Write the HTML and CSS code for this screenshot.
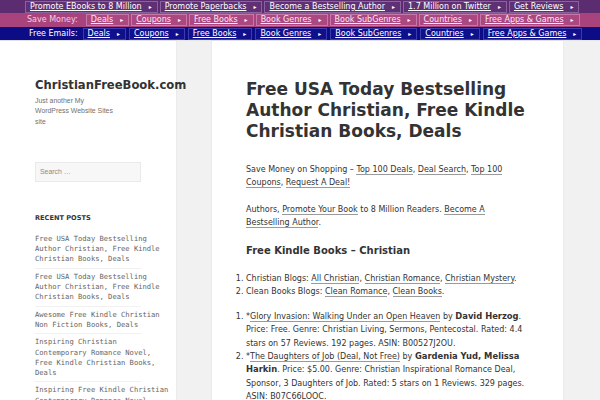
FILE: index.html
```html
<!DOCTYPE html>
<html>
<head>
<meta charset="utf-8">
<link rel="stylesheet" href="styles.css">
</head>
<body>
<div class="topnav">
  <div class="navrow row1">
    <span class="box"><a href="#">Promote EBooks to 8 Million</a><span class="arr">▸</span></span>
    <span class="box"><a href="#">Promote Paperbacks</a><span class="arr">▸</span></span>
    <span class="box"><a href="#">Become a Bestselling Author</a><span class="arr">▸</span></span>
    <span class="box"><a href="#">1.7 Million on Twitter</a><span class="arr">▸</span></span>
    <span class="box"><a href="#">Get Reviews</a><span class="arr">▸</span></span>
  </div>
  <div class="navrow row2">
    <span class="label">Save Money:</span>
    <span class="box"><a href="#">Deals</a><span class="arr">▸</span></span>
    <span class="box"><a href="#">Coupons</a><span class="arr">▸</span></span>
    <span class="box"><a href="#">Free Books</a><span class="arr">▸</span></span>
    <span class="box"><a href="#">Book Genres</a><span class="arr">▸</span></span>
    <span class="box"><a href="#">Book SubGenres</a><span class="arr">▸</span></span>
    <span class="box"><a href="#">Countries</a><span class="arr">▸</span></span>
    <span class="box"><a href="#">Free Apps &amp; Games</a><span class="arr">▸</span></span>
  </div>
  <div class="navrow row3">
    <span class="label">Free Emails:</span>
    <span class="box"><a href="#">Deals</a><span class="arr">▸</span></span>
    <span class="box"><a href="#">Coupons</a><span class="arr">▸</span></span>
    <span class="box"><a href="#">Free Books</a><span class="arr">▸</span></span>
    <span class="box"><a href="#">Book Genres</a><span class="arr">▸</span></span>
    <span class="box"><a href="#">Book SubGenres</a><span class="arr">▸</span></span>
    <span class="box"><a href="#">Countries</a><span class="arr">▸</span></span>
    <span class="box"><a href="#">Free Apps &amp; Games</a><span class="arr">▸</span></span>
  </div>
</div>

<div class="page">
  <aside class="sidebar">
    <div class="site-title">ChristianFreeBook.com</div>
    <div class="tagline">Just another My WordPress Website Sites site</div>
    <div class="search">Search …</div>
    <h2 class="widget-title">RECENT POSTS</h2>
    <ul class="recent">
      <li>Free USA Today Bestselling Author Christian, Free Kindle Christian Books, Deals</li>
      <li>Free USA Today Bestselling Author Christian, Free Kindle Christian Books, Deals</li>
      <li>Awesome Free Kindle Christian Non Fiction Books, Deals</li>
      <li>Inspiring Christian Contemporary Romance Novel, Free Kindle Christian Books, Deals</li>
      <li>Inspiring Free Kindle Christian Contemporary Romance Novel, Deals</li>
    </ul>
  </aside>
  <div class="gutter"></div>
  <main class="content">
    <h1 class="entry-title">Free USA Today Bestselling Author Christian, Free Kindle Christian Books, Deals</h1>
    <p>Save Money on Shopping – <a href="#">Top 100 Deals</a>, <a href="#">Deal Search</a>, <a href="#">Top 100 Coupons</a>, <a href="#">Request A Deal!</a></p>
    <p>Authors, <a href="#">Promote Your Book</a> to 8 Million Readers. <a href="#">Become A Bestselling Author</a>.</p>
    <p class="sub"><strong>Free Kindle Books – Christian</strong></p>
    <ol>
      <li>Christian Blogs: <a href="#">All Christian</a>, <a href="#">Christian Romance</a>, <a href="#">Christian Mystery</a>.</li>
      <li>Clean Books Blogs: <a href="#">Clean Romance</a>, <a href="#">Clean Books</a>.</li>
    </ol>
    <ol>
      <li>*<a href="#">Glory Invasion: Walking Under an Open Heaven</a> by <strong>David Herzog</strong>. Price: Free. Genre: Christian Living, Sermons, Pentecostal. Rated: 4.4 stars on 57 Reviews. 192 pages. ASIN: B00527J2OU.</li>
      <li>*<a href="#">The Daughters of Job (Deal, Not Free)</a> by <strong>Gardenia Yud, Melissa Harkin</strong>. Price: $5.00. Genre: Christian Inspirational Romance Deal, Sponsor, 3 Daughters of Job. Rated: 5 stars on 1 Reviews. 329 pages. ASIN: B07C66LOOC.</li>
    </ol>
  </main>
</div>
</body>
</html>
```

FILE: styles.css
```css
html, body {
  margin: 0;
  padding: 0;
}
body {
  background: #f1f1f1;
  font-family: "DejaVu Sans", Verdana, sans-serif;
  color: #333;
  overflow: hidden;
}

/* Top navigation bars */
.topnav {
  display: flex;
  flex-direction: column;
}
.navrow {
  display: flex;
  align-items: center;
  padding-left: 25px;
  font-size: 8px;
  white-space: nowrap;
}
.row1 { height: 13px; background: #5b2c6f; }
.row2 { height: 14px; background: #a8437e; }
.row3 { height: 13px; background: #0c0c86; border-bottom: 1px solid #e6e6e6; }

.label {
  margin: 0 8px 0 2px;
  line-height: 10px;
}
.row2 .label { color: #f3cde2; }
.row3 .label { color: #ffffff; margin-left: 4px; margin-right: 5px; }

.box {
  display: flex;
  align-items: center;
  height: 10px;
  padding: 0 5px 0 4px;
  margin-right: 2px;
  border: 1px solid;
  line-height: 10px;
}
.row1 .box { border-color: #8a62a0; background: #5f3174; }
.row2 .box { border-color: #c678a6; background: #ab4781; }
.row3 .box { border-color: #3b3bb0; background: #10108c; margin-right: 3px; }

.box a {
  color: #fff;
  text-decoration: underline;
}
.row2 .box a { color: #fde8f3; }
.arr {
  color: #fff;
  font-size: 6px;
  margin-left: 7px;
}

/* Page layout */
.page {
  display: flex;
  align-items: stretch;
  min-height: 360px;
}
.sidebar {
  width: 176px;
  flex: none;
  background: #fff;
  box-shadow: 0 0 1px rgba(0,0,0,0.15);
  padding: 37px 0 0 35px;
  box-sizing: border-box;
}
.gutter {
  width: 36px;
  flex: none;
}
.content {
  width: 351px;
  flex: none;
  background: #fff;
  box-shadow: 0 0 1px rgba(0,0,0,0.15);
  padding: 38px 34px 0 34px;
  box-sizing: border-box;
  font-size: 8px;
  line-height: 13.3px;
}

/* Sidebar */
.site-title {
  font-weight: bold;
  font-size: 11.6px;
  line-height: 15px;
  color: #333;
  white-space: nowrap;
}
.tagline {
  font-family: "Liberation Sans", Arial, sans-serif;
  font-size: 6.9px;
  line-height: 10.3px;
  color: #707070;
  width: 80px;
  margin-top: 3px;
}
.search {
  margin-top: 35px;
  width: 106px;
  height: 20px;
  box-sizing: border-box;
  border: 1px solid #eaeaea;
  background: #f7f7f7;
  font-family: "Liberation Sans", Arial, sans-serif;
  font-size: 6.9px;
  line-height: 18px;
  padding-left: 4px;
  color: #8a8a8a;
}
.widget-title {
  margin: 31px 0 0 0;
  font-size: 6.6px;
  line-height: 10px;
  font-weight: bold;
  color: #333;
}
.recent {
  list-style: none;
  margin: 11px 0 0 0;
  padding: 0;
  width: 136px;
}
.recent li {
  font-family: "DejaVu Sans Mono", monospace;
  font-size: 7.15px;
  line-height: 10.3px;
  color: #666;
  padding: 3px 0 4px 0;
  position: relative;
}
.recent li:first-child { padding-top: 0; }
.recent li::after {
  content: "";
  position: absolute;
  left: 0;
  bottom: 0;
  width: 106px;
  border-bottom: 1px solid #f1f1f1;
}

/* Content */
.entry-title {
  margin: 0 0 21.5px 0;
  font-size: 17px;
  line-height: 20.8px;
  font-weight: bold;
  color: #333;
}
.content p {
  margin: 0 0 13.2px 0;
}
.content p.sub {
  font-size: 10px;
  line-height: 13.3px;
  margin-top: 14.5px;
  margin-bottom: 15px;
}
.content a {
  color: #333;
  text-decoration: none;
  border-bottom: 1px solid #9a9a9a;
}
.content ol {
  margin: 0 0 11.5px 0;
  padding: 0;
  list-style: decimal outside;
}
.content strong {
  font-weight: bold;
  font-size: 8.4px;
}
.content p.sub strong {
  font-size: 10px;
}
```
